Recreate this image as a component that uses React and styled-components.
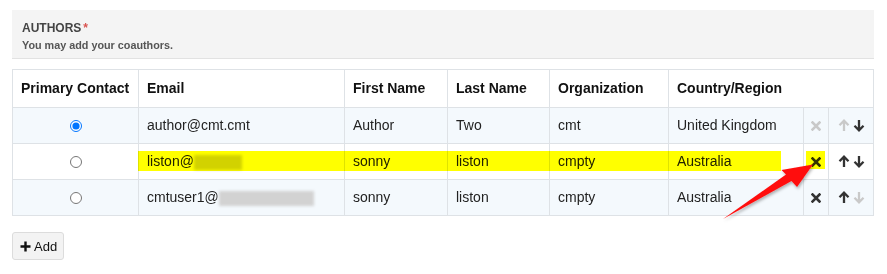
import styled, { createGlobalStyle } from "styled-components";

const GlobalStyle = createGlobalStyle`
  html, body {
    margin: 0;
    padding: 0;
    background: #fff;
    font-family: "Liberation Sans", Arial, sans-serif;
    color: #222;
  }
`;

const authors = [
  {
    primary: true,
    email: "author@cmt.cmt",
    hidden: 0,
    first: "Author",
    last: "Two",
    org: "cmt",
    country: "United Kingdom",
    canDelete: false,
    canUp: false,
    canDown: true,
  },
  {
    primary: false,
    email: "liston@",
    hidden: 48,
    first: "sonny",
    last: "liston",
    org: "cmpty",
    country: "Australia",
    canDelete: true,
    canUp: true,
    canDown: true,
  },
  {
    primary: false,
    email: "cmtuser1@",
    hidden: 95,
    first: "sonny",
    last: "liston",
    org: "cmpty",
    country: "Australia",
    canDelete: true,
    canUp: true,
    canDown: false,
  },
];

const widths = [126, 206, 103, 102, 119, 135, 25, 45];

const CloseIcon = ({ on }) => (
  <svg width="10" height="10" viewBox="0 0 10 10">
    <path
      d="M1.5 1.5 L8.5 8.5 M8.5 1.5 L1.5 8.5"
      stroke={on ? "#333" : "#c9c9c9"}
      strokeWidth="2.6"
      strokeLinecap="square"
    />
  </svg>
);

const ArrowIcon = ({ on, down }) => (
  <svg
    width="12"
    height="13"
    viewBox="0 0 12 13"
    style={down ? { transform: "rotate(180deg)" } : undefined}
  >
    <path
      d="M6 12 L6 2 M1.5 6.2 L6 1.7 L10.5 6.2"
      stroke={on ? "#333" : "#c9c9c9"}
      strokeWidth="2.3"
      fill="none"
      strokeLinecap="butt"
      strokeLinejoin="miter"
    />
  </svg>
);

const PlusIcon = () => (
  <svg width="11" height="11" viewBox="0 0 11 11">
    <path d="M5.5 0.5 V10.5 M0.5 5.5 H10.5" stroke="#111" strokeWidth="2.4" />
  </svg>
);

function App() {
  return (
    <Page>
      <GlobalStyle />
      <SectionHead>
        <SectionTitle>
          AUTHORS<Required>*</Required>
        </SectionTitle>
        <SectionHint>You may add your coauthors.</SectionHint>
      </SectionHead>

      <Table>
        <colgroup>
          {widths.map((w, i) => (
            <col key={i} style={{ width: w }} />
          ))}
        </colgroup>
        <thead>
          <tr>
            <Th>Primary Contact</Th>
            <Th>Email</Th>
            <Th>First Name</Th>
            <Th>Last Name</Th>
            <Th>Organization</Th>
            <Th colSpan={3}>Country/Region</Th>
          </tr>
        </thead>
        <tbody>
          {authors.map((a, i) => (
            <Row key={i} $striped={i % 2 === 0}>
              <Td $center>
                <Radio type="radio" name="primary" defaultChecked={a.primary} />
              </Td>
              <Td>
                {a.email}
                {a.hidden > 0 && <Redacted style={{ width: a.hidden }} />}
              </Td>
              <Td>{a.first}</Td>
              <Td>{a.last}</Td>
              <Td>{a.org}</Td>
              <Td>{a.country}</Td>
              <IconCell>
                <IconButton>
                  <CloseIcon on={a.canDelete} />
                </IconButton>
              </IconCell>
              <IconCell>
                <MoveButtons>
                  <IconButton>
                    <ArrowIcon on={a.canUp} />
                  </IconButton>
                  <IconButton>
                    <ArrowIcon on={a.canDown} down />
                  </IconButton>
                </MoveButtons>
              </IconCell>
            </Row>
          ))}
        </tbody>
      </Table>

      <AddButton>
        <PlusIcon />
        Add
      </AddButton>

      <Annotations width="887" height="274" viewBox="0 0 887 274">
        <defs>
          <filter id="arrowShadow" x="-20%" y="-20%" width="140%" height="140%">
            <feDropShadow dx="1" dy="2" stdDeviation="1.5" floodColor="#000" floodOpacity="0.3" />
          </filter>
        </defs>
        <Highlight x="138" y="151" width="643" height="20" />
        <Highlight x="806" y="151" width="19" height="18" />
        <polygon
          points="723,219 786,174.5 781.5,170 813,164.5 797,187 791.5,181"
          fill="#ff1010"
          filter="url(#arrowShadow)"
        />
      </Annotations>
    </Page>
  );
}

export default App;

const Page = styled.div`
  position: relative;
  width: 887px;
  height: 274px;
  box-sizing: border-box;
  padding: 10px 13px 0 12px;
`;

const SectionHead = styled.div`
  background: #f4f4f4;
  border-bottom: 1px solid #e2e2e2;
  padding: 11px 10px 6px;
  margin-bottom: 10px;
`;

const SectionTitle = styled.div`
  font-size: 12px;
  font-weight: bold;
  color: #444;
  line-height: 14px;
`;

const Required = styled.span`
  color: #d9534f;
  margin-left: 2px;
`;

const SectionHint = styled.div`
  font-size: 10.8px;
  font-weight: bold;
  color: #555;
  line-height: 14px;
  margin-top: 3px;
`;

const Table = styled.table`
  width: 862px;
  table-layout: fixed;
  border-collapse: collapse;
  font-size: 14px;
`;

const Th = styled.th`
  text-align: left;
  font-weight: bold;
  color: #111;
  line-height: 17px;
  padding: 10px 8px;
  border: 1px solid #dee2e6;
  white-space: nowrap;
`;

const Row = styled.tr`
  background: ${(p) => (p.$striped ? "#f4f9fd" : "#fff")};
`;

const Td = styled.td`
  border: 1px solid #dee2e6;
  padding: 9px 8px;
  line-height: 17px;
  color: #222;
  white-space: nowrap;
  vertical-align: middle;
  text-align: ${(p) => (p.$center ? "center" : "left")};
`;

const IconCell = styled.td`
  border: 1px solid #dee2e6;
  padding: 0;
  text-align: center;
  vertical-align: middle;
`;

const MoveButtons = styled.div`
  display: flex;
  justify-content: center;
  gap: 3px;
`;

const IconButton = styled.span`
  display: inline-flex;
  align-items: center;
  justify-content: center;
  cursor: pointer;
`;

const Radio = styled.input`
  margin: 0;
  width: 12px;
  height: 12px;
  vertical-align: middle;
`;

const Redacted = styled.span`
  display: inline-block;
  height: 15px;
  vertical-align: middle;
  background: #d2d2d2;
  filter: blur(1.5px);
`;

const AddButton = styled.button`
  display: flex;
  align-items: center;
  gap: 3px;
  margin-top: 16px;
  height: 28px;
  padding: 0 6px 0 7px;
  background: #f3f3f3;
  border: 1px solid #dcdcdc;
  border-radius: 3px;
  font-family: "Liberation Sans", Arial, sans-serif;
  font-size: 13px;
  color: #111;
  cursor: pointer;
`;

const Annotations = styled.svg`
  position: absolute;
  left: 0;
  top: 0;
  pointer-events: none;
`;

const Highlight = styled.rect`
  fill: #ffff00;
  mix-blend-mode: multiply;
`;
